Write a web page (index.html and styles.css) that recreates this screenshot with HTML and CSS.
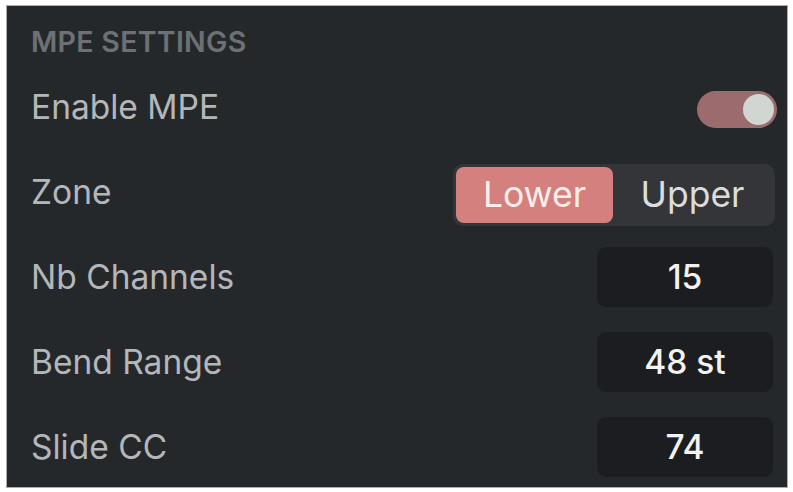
FILE: index.html
```html
<!DOCTYPE html>
<html>
<head>
<meta charset="utf-8">
<link rel="stylesheet" href="styles.css">
</head>
<body>
<div class="panel">
  <div class="header">MPE SETTINGS</div>
  <div class="row">
    <span class="label">Enable MPE</span>
    <div class="toggle"><div class="knob"></div></div>
  </div>
  <div class="row">
    <span class="label">Zone</span>
    <div class="seg">
      <div class="seg-btn active">Lower</div>
      <div class="seg-btn">Upper</div>
    </div>
  </div>
  <div class="row">
    <span class="label">Nb Channels</span>
    <div class="value">15</div>
  </div>
  <div class="row">
    <span class="label">Bend Range</span>
    <div class="value">48 st</div>
  </div>
  <div class="row">
    <span class="label">Slide CC</span>
    <div class="value">74</div>
  </div>
</div>
</body>
</html>
```
FILE: styles.css
```css
html, body {
  margin: 0;
  padding: 0;
  background: #ffffff;
}
body {
  padding: 5px 0 0 6px;
  font-family: Inter, "Noto Sans", sans-serif;
}
.panel {
  width: 782px;
  height: 483px;
  box-sizing: border-box;
  background: #25282b;
  border: 1px solid #a9abad;
  padding: 0 12px 0 24px;
  overflow: hidden;
  display: flex;
  flex-direction: column;
}
.header {
  height: 59px;
  flex: 0 0 59px;
  box-sizing: border-box;
  padding-top: 19px;
  line-height: 34px;
  font-size: 28.5px;
  font-weight: 600;
  color: #6d7175;
  letter-spacing: 0.3px;
}
.row {
  height: 85px;
  flex: 0 0 85px;
  display: flex;
  align-items: center;
  justify-content: space-between;
}
.label {
  font-size: 33.5px;
  color: #b4b7ba;
  margin-top: -2px;
}
.toggle {
  width: 80px;
  height: 37px;
  border-radius: 19px;
  background: #9c6b6d;
  display: flex;
  align-items: center;
  justify-content: flex-end;
  padding-right: 3px;
  box-sizing: border-box;
  margin-top: 3px;
  margin-right: -2px;
}
.knob {
  width: 31px;
  height: 31px;
  border-radius: 50%;
  background: #d2d6d2;
}
.seg {
  display: flex;
  width: 322px;
  height: 62px;
  box-sizing: border-box;
  padding: 3px;
  border-radius: 10px;
  background: #333538;
  margin-top: 4px;
}
.seg-btn {
  flex: 1;
  display: flex;
  align-items: center;
  justify-content: center;
  font-size: 35.5px;
  color: #dcdcdc;
  border-radius: 8px;
}
.seg-btn.active {
  flex: 0 0 157px;
  background: #d3807f;
  color: #fdeeea;
}
.value {
  width: 176px;
  height: 60px;
  border-radius: 9px;
  background: #1c1d20;
  display: flex;
  align-items: center;
  justify-content: center;
  font-size: 33.5px;
  font-weight: 500;
  color: #f2f2f2;
  margin-right: 2px;
  margin-top: -2px;
}
```
